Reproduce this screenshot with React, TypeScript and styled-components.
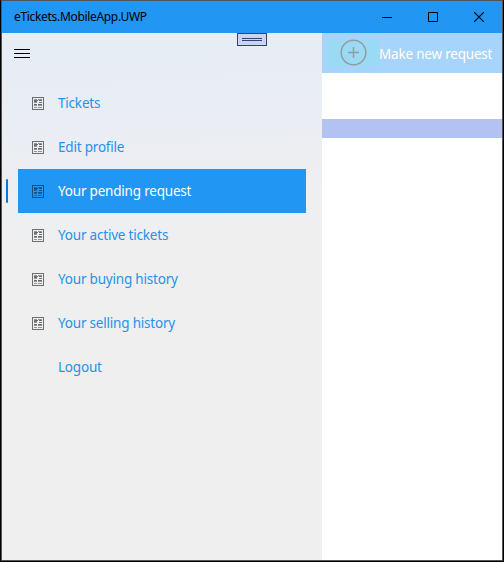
import React from "react";
import styled, { createGlobalStyle } from "styled-components";

const GlobalStyle = createGlobalStyle`
  *, *::before, *::after { box-sizing: border-box; }
  body { margin: 0; overflow: hidden; background: #000; font-family: "Noto Sans", "Open Sans", sans-serif; }
`;

const Window = styled.div`
  width: 504px;
  height: 562px;
  display: flex;
  flex-direction: column;
  border: solid #000;
  border-width: 0 1px 1px 1px;
  padding: 1px;
  background: #555;
`;

const TitleBar = styled.header`
  height: 32px;
  flex: none;
  display: flex;
  align-items: center;
  justify-content: space-between;
  padding-left: 12px;
  background: #2196f3;
`;

const Label = styled.span<{ $size?: number; $spacing?: number }>`
  font-size: ${(p) => p.$size ?? 13.5}px;
  letter-spacing: ${(p) => p.$spacing ?? -0.2}px;
  line-height: 20px;
  white-space: nowrap;
`;

const WindowButtons = styled.div`
  display: flex;
`;

const WindowButton = styled.button`
  width: 46px;
  height: 32px;
  padding: 0;
  border: 0;
  display: grid;
  place-items: center;
  background: none;
`;

const Body = styled.div`
  flex: 1;
  display: flex;
  min-height: 0;
`;

const Drawer = styled.aside`
  position: relative;
  width: 320px;
  flex: none;
  background: linear-gradient(176deg, #e6edf5 0, #e9edf4 85px, #eeeff2 170px, #efefef 240px);
`;

const MenuButton = styled.button`
  display: block;
  height: 40px;
  width: 40px;
  padding: 0 0 0 12px;
  border: 0;
  background: none;
  svg { display: block; }
`;

const DebugHandle = styled.div`
  position: absolute;
  top: 0;
  left: 235px;
  width: 30px;
  height: 13px;
  border: 1px solid #34436f;
  background: #cad4ef;
  display: flex;
  flex-direction: column;
  gap: 1px;
  padding: 4px;
  &::before, &::after { content: ""; height: 1px; background: #34436f; }
`;

const Menu = styled.nav`
  padding: 8px 16px 0;
`;

const MenuItem = styled.a<{ $selected?: boolean }>`
  position: relative;
  display: grid;
  grid-template-columns: 26px 1fr;
  align-items: center;
  height: 44px;
  padding-left: 14px;
  color: ${(p) => (p.$selected ? "#fff" : "#2492ec")};
  background: ${(p) => (p.$selected ? "#2196f3" : "transparent")};
  &::before {
    content: "";
    display: ${(p) => (p.$selected ? "block" : "none")};
    position: absolute;
    left: -12px;
    top: 10px;
    width: 2px;
    height: 24px;
    border-radius: 1px;
    background: #0b78d3;
  }
`;

const IconSlot = styled.span<{ $selected?: boolean }>`
  height: 13px;
  color: ${(p) => (p.$selected ? "#174f80" : "#6c6e70")};
  svg { display: block; }
`;

const Page = styled.main`
  flex: 1;
  min-width: 0;
  background: #fff;
`;

const Toolbar = styled.div`
  display: flex;
  height: 40px;
  padding: 6px 0 0 6px;
  color: #fff;
  background: #a6d4fa;
`;

const AddButton = styled.button`
  width: 51px;
  height: 27px;
  padding: 0;
  border: 0;
  display: grid;
  place-items: center;
  background: #99daf5;
  svg { display: block; }
`;

const ToolbarText = styled.div`
  padding-top: 3px;
`;

const SectionBar = styled.div`
  margin-top: 46px;
  height: 19px;
  background: #b3c2f3;
`;

const NewsIcon = () => (
  <svg width="12" height="13" viewBox="0 0 12 13" fill="none" stroke="currentColor" shapeRendering="crispEdges">
    <path d="M.5.5h11v12H.5z" />
    <path d="M2 3.5h4M7 3.5h3M2 4.5h3M2 7.5h3M6 7.5h4M7 5.5h3" />
    <path d="M2 2.5h3M6 2.5h4M2 5.5h3M2 8.5h3M6 8.5h4M2 10.5h3M6 10.5h4" strokeOpacity=".7" />
  </svg>
);

const items = [
  { text: "Tickets" },
  { text: "Edit profile" },
  { text: "Your pending request", selected: true },
  { text: "Your active tickets" },
  { text: "Your buying history" },
  { text: "Your selling history" },
  { text: "Logout", plain: true },
];

export default function App() {
  return (
    <>
      <GlobalStyle />
      <Window>
        <TitleBar>
          <Label $size={12} $spacing={-0.32}>eTickets.MobileApp.UWP</Label>
          <WindowButtons>
            <WindowButton aria-label="Minimize">
              <svg width="10" height="10"><path d="M0 5.5h10" stroke="#000" /></svg>
            </WindowButton>
            <WindowButton aria-label="Maximize">
              <svg width="10" height="10"><path d="M.5.5h9v9h-9z" fill="none" stroke="#000" /></svg>
            </WindowButton>
            <WindowButton aria-label="Close">
              <svg width="10" height="10"><path d="M0 0l10 10M10 0L0 10" stroke="#000" strokeWidth="1.2" /></svg>
            </WindowButton>
          </WindowButtons>
        </TitleBar>
        <Body>
          <Drawer>
            <MenuButton aria-label="Menu">
              <svg width="16" height="9"><path d="M0 .5h16M0 4.5h16M0 8.5h16" stroke="#000" /></svg>
            </MenuButton>
            <DebugHandle />
            <Menu>
              {items.map((item) => (
                <MenuItem key={item.text} $selected={item.selected}>
                  <IconSlot $selected={item.selected}>{!item.plain && <NewsIcon />}</IconSlot>
                  <Label>{item.text}</Label>
                </MenuItem>
              ))}
            </Menu>
          </Drawer>
          <Page>
            <Toolbar>
              <AddButton aria-label="Add">
                <svg width="27" height="27" fill="none" stroke="#969b9f">
                  <circle cx="13.5" cy="13.5" r="12.3" strokeWidth="1.5" />
                  <path d="M8 13.5h11M13.5 8v11" strokeWidth="1.5" />
                </svg>
              </AddButton>
              <ToolbarText>
                <Label>Make new request</Label>
              </ToolbarText>
            </Toolbar>
            <SectionBar />
          </Page>
        </Body>
      </Window>
    </>
  );
}
